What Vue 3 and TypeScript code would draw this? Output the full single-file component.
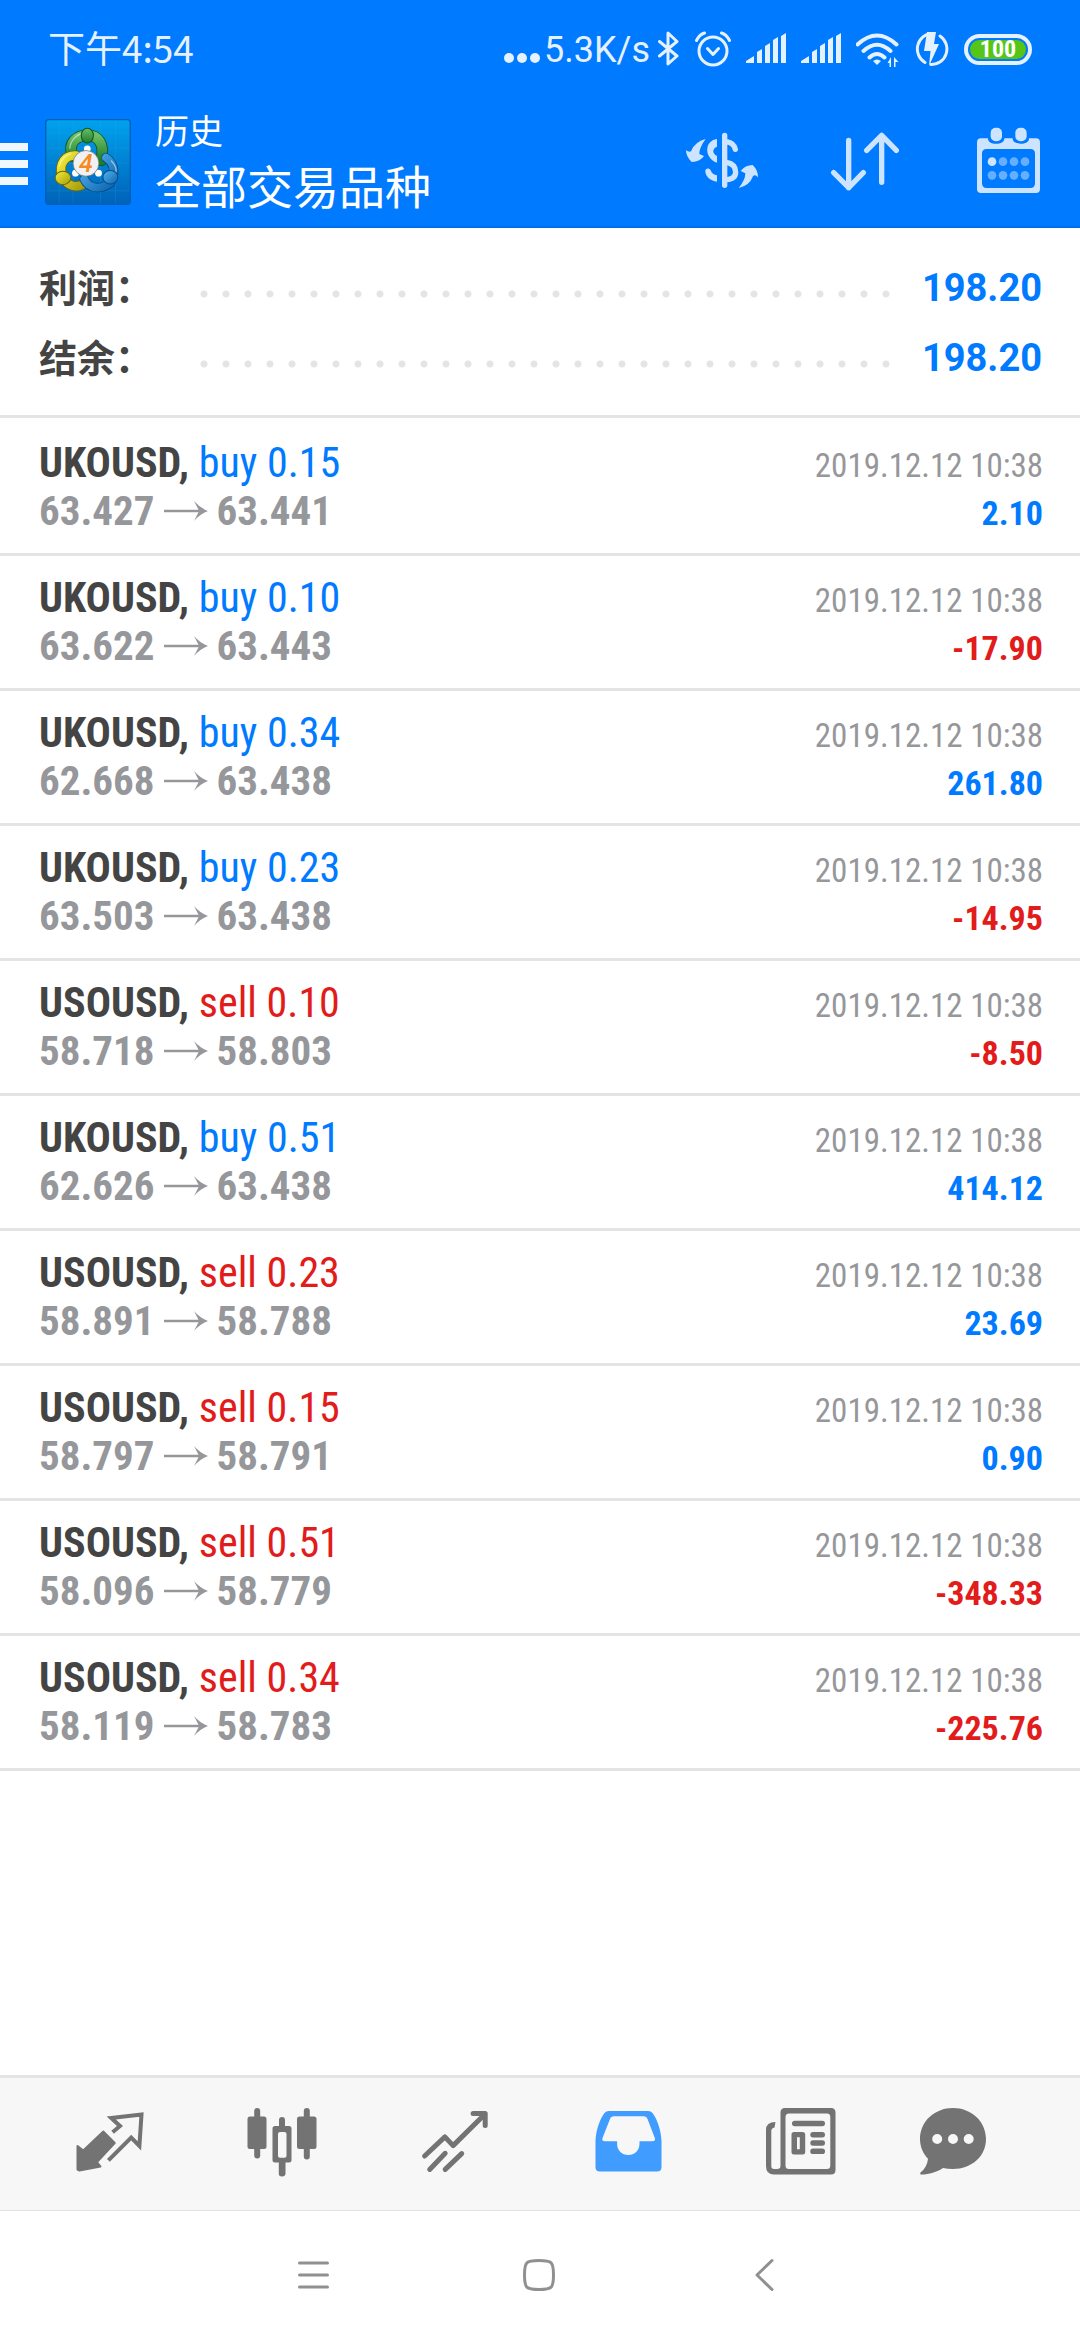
<script setup lang="ts">
interface Deal {
  symbol: string
  side: 'buy' | 'sell'
  volume: string
  open: string
  close: string
  time: string
  profit: string
}

const summary = [
  { label: '利润', value: '198.20' },
  { label: '结余', value: '198.20' },
]

const time = '2019.12.12 10:38'

const deals: Deal[] = [
  { symbol: 'UKOUSD', side: 'buy', volume: '0.15', open: '63.427', close: '63.441', time, profit: '2.10' },
  { symbol: 'UKOUSD', side: 'buy', volume: '0.10', open: '63.622', close: '63.443', time, profit: '-17.90' },
  { symbol: 'UKOUSD', side: 'buy', volume: '0.34', open: '62.668', close: '63.438', time, profit: '261.80' },
  { symbol: 'UKOUSD', side: 'buy', volume: '0.23', open: '63.503', close: '63.438', time, profit: '-14.95' },
  { symbol: 'USOUSD', side: 'sell', volume: '0.10', open: '58.718', close: '58.803', time, profit: '-8.50' },
  { symbol: 'UKOUSD', side: 'buy', volume: '0.51', open: '62.626', close: '63.438', time, profit: '414.12' },
  { symbol: 'USOUSD', side: 'sell', volume: '0.23', open: '58.891', close: '58.788', time, profit: '23.69' },
  { symbol: 'USOUSD', side: 'sell', volume: '0.15', open: '58.797', close: '58.791', time, profit: '0.90' },
  { symbol: 'USOUSD', side: 'sell', volume: '0.51', open: '58.096', close: '58.779', time, profit: '-348.33' },
  { symbol: 'USOUSD', side: 'sell', volume: '0.34', open: '58.119', close: '58.783', time, profit: '-225.76' },
]

const isLoss = (profit: string): boolean => profit.startsWith('-')
</script>

<template>
  <div class="screen">
    <header class="top">
      <div class="status">
        <span class="clock">下午4:54</span>
        <div class="indicators">
          <svg class="more" viewBox="0 0 36 36" width="36" height="36" aria-hidden="true">
            <circle cx="5" cy="27" r="5" /><circle cx="18" cy="27" r="5" /><circle cx="31" cy="27" r="5" />
          </svg>
          <span class="speed">5.3K/s</span>
          <div class="symbols">
            <svg viewBox="0 0 22 36" width="22" height="36" aria-hidden="true">
              <path d="M1.500 10.500 19 25 10 33V2L19 10.500 1.500 25" class="line" />
            </svg>
            <svg viewBox="0 0 36 36" width="36" height="36" aria-hidden="true">
              <circle cx="18" cy="20" r="14" class="line" />
              <path d="M12.500 17.500 18 23.500 23.500 17.500M1.500 9.500C3 6.500 6 3 9.500 2M34.500 9.500C33 6.500 30 3 26.500 2" class="line" />
            </svg>
            <svg v-for="n in 2" :key="n" viewBox="0 0 40 36" width="40" height="36" aria-hidden="true">
              <path d="M0 32V30L8 25V32ZM11 32V21L16 18V32ZM19 32V15L24 12V32ZM27 32V9L32 6V32ZM35 32V5L40 2V32Z" />
            </svg>
            <svg viewBox="0 0 44 36" width="44" height="36" aria-hidden="true">
              <path d="M1.500 13.500Q21 -4.500 40.500 13.500M7.500 20Q21 7.500 34.500 20M13.500 26.500Q21 19.500 28.500 26.500" class="arc" />
              <path d="M17 30Q21 27 25 30L21 34ZM35 26V36H33.500V32H31.500ZM38 36V26L42.500 31H39.500V36Z" />
            </svg>
            <svg viewBox="0 0 34 36" width="34" height="36" aria-hidden="true">
              <path d="M17 2.500A15 15.500 0 0 0 10 31.500M25 5A15 15.500 0 0 1 16 33.500" class="line" />
              <path d="M12 1H21L19 13H24L14 35 15.500 20H9Z" />
            </svg>
            <span class="battery"><span class="charge">100</span></span>
          </div>
        </div>
      </div>

      <div class="bar">
        <button class="menu" type="button" aria-label="菜单"><i></i><i></i><i></i></button>
        <svg class="logo" viewBox="48 58 254 254" width="86" height="86" aria-hidden="true">
          <defs>
            <linearGradient id="tile" x1="0" y1="0" x2="0" y2="1">
              <stop offset="0" stop-color="#00a2ee" /><stop offset="1" stop-color="#0062b8" />
            </linearGradient>
            <linearGradient id="green" x1="0" y1="0" x2="0" y2="1">
              <stop offset="0" stop-color="#6cc067" /><stop offset="1" stop-color="#1c7d2b" />
            </linearGradient>
            <linearGradient id="yellow" x1="0" y1="0" x2="1" y2="1">
              <stop offset="0" stop-color="#f4ec3c" /><stop offset="1" stop-color="#a79b08" />
            </linearGradient>
            <linearGradient id="blue" x1="0" y1="0" x2="1" y2="1">
              <stop offset="0" stop-color="#55b4ee" /><stop offset="1" stop-color="#0c66b0" />
            </linearGradient>
          </defs>
          <rect x="50" y="60" width="250" height="250" rx="9" fill="url(#tile)" stroke="#0060b4" stroke-width="4" />
          <path d="M90 62V308M131 62V308M212 62V308M256 62V308M52 100H298M52 144H298M52 188H298M52 270H298" stroke="#3db4f0" stroke-opacity=".25" stroke-width="2" />
          <g fill="#fff"><circle cx="138" cy="218" r="10" /><circle cx="206" cy="218" r="10" /><circle cx="173" cy="146" r="10" /></g>
          <g fill="none" stroke-linecap="round">
            <path d="M130 168C112 126 146 106 173 106C204 106 226 130 214 180" stroke="#14561d" stroke-width="34" />
            <path d="M130 168C112 126 146 106 173 106C204 106 226 130 214 180" stroke="url(#green)" stroke-width="29" />
            <path d="M140 166C108 164 88 188 98 226M108 240C124 262 152 260 166 246" stroke="#6c6604" stroke-width="30" />
            <path d="M140 166C108 164 88 188 98 226M108 240C124 262 152 260 166 246" stroke="url(#yellow)" stroke-width="25" />
            <path d="M228 172C246 184 256 204 248 230M164 236C180 268 216 266 242 246" stroke="#064a86" stroke-width="28" />
            <path d="M228 172C246 184 256 204 248 230M164 236C180 268 216 266 242 246" stroke="url(#blue)" stroke-width="23" />
            <path d="M121 144C124 120 142 104 158 100M91 196C94 176 110 164 124 161M244 182C254 192 259 204 258 214" stroke="#fff" stroke-opacity=".5" stroke-width="4" />
          </g>
          <ellipse cx="173" cy="107" rx="18" ry="22" fill="url(#green)" stroke="#14561d" stroke-width="3" />
          <ellipse cx="101" cy="232" rx="23" ry="20" fill="url(#yellow)" stroke="#6c6604" stroke-width="3" />
          <ellipse cx="241" cy="230" rx="22" ry="20" fill="url(#blue)" stroke="#064a86" stroke-width="3" />
          <circle cx="169" cy="189" r="38" fill="#f1f1f3" stroke="#6d6d60" stroke-width="2" />
          <text x="169" y="214" text-anchor="middle" class="version">4</text>
        </svg>
        <div class="titles">
          <span class="section">历史</span>
          <h1>全部交易品种</h1>
        </div>
        <div class="actions">
          <button type="button" aria-label="货币">
            <svg viewBox="0 0 216 216" width="72" height="72">
              <path d="M0 79Q10 86 15 82 26 53 59 45 40 70 40 90L54 96Q44 113 17 114 0 98 0 79ZM164 141Q177 123 200 123 216 138 216 160 207 150 201 157 190 186 158 192 178 168 178 148ZM93 45C54 50 54 103 93 116V96C78 88 78 74 93 68ZM58 143C57 133 69 130 74 139 77 148 84 153 93 154V173C74 170 60 159 58 143Z" />
              <path d="M116 34V184M122 53Q144 57 148 76" class="stroke" />
              <path d="M122 115C142 119 149 131 149 144 149 160 136 166 122 167" class="stroke" />
            </svg>
          </button>
          <button type="button" aria-label="排序">
            <svg viewBox="0 0 216 216" width="72" height="72">
              <path d="M59 49V191M14 146 59 191 103 146M158 175V34M113 79 158 34 202 79" class="stroke" />
            </svg>
          </button>
          <button type="button" aria-label="日期">
            <svg viewBox="0 0 216 216" width="72" height="72">
              <path fill-rule="evenodd" d="M27 43H48V44C48 53 58 59 72 59S97 53 97 44V43H122V44C122 53 132 59 146 59S171 53 171 44V43H192Q204 43 204 55V195Q204 207 192 207H27Q15 207 15 195V55Q15 43 27 43ZM44 75Q30 75 30 89V178Q30 192 44 192H175Q189 192 189 178V89Q189 75 175 75Z" />
              <rect x="56" y="11" width="34" height="41" rx="15" /><rect x="130" y="11" width="34" height="41" rx="15" />
              <circle cx="60" cy="113" r="13" />
              <g class="dim">
                <circle v-for="x in [93, 126, 159]" :key="x" :cx="x" cy="113" r="13" />
                <circle v-for="x in [60, 93, 126, 159]" :key="x" :cx="x" cy="154" r="13" />
              </g>
            </svg>
          </button>
        </div>
      </div>
    </header>

    <main>
      <dl class="summary">
        <div v-for="item in summary" :key="item.label" class="total">
          <dt>{{ item.label }}：</dt>
          <dd>{{ item.value }}</dd>
        </div>
      </dl>
      <ul class="deals">
        <li v-for="(deal, i) in deals" :key="i" class="deal">
          <div class="row">
            <span class="name">{{ deal.symbol }}, <span class="order" :class="deal.side">{{ deal.side }} {{ deal.volume }}</span></span>
            <time>{{ deal.time }}</time>
          </div>
          <div class="row">
            <span class="prices">
              <span>{{ deal.open }}</span>
              <svg viewBox="0 0 44 22" width="44" height="22" aria-hidden="true">
                <path d="M0 9.800H34.500L30 1Q36 8 44 11 36 14 30 21L34.500 12.200H0Z" />
              </svg>
              <span>{{ deal.close }}</span>
            </span>
            <span class="profit" :class="{ loss: isLoss(deal.profit) }">{{ deal.profit }}</span>
          </div>
        </li>
      </ul>
    </main>

    <nav class="tabs">
      <button type="button" aria-label="行情">
        <svg viewBox="0 0 72 72" width="72" height="72">
          <path d="M4.500 38 10.300 42.500 30.300 23.500 41.700 35 24 54 27.500 58.500 6.500 62.500 4.500 61.500Z" class="solid" />
          <path d="M39.600 24.200 47 18 38.200 9.900 68.500 6.500 66.400 38 58.200 29.600 35.400 52.300" class="thin" />
        </svg>
      </button>
      <button type="button" aria-label="图表">
        <svg viewBox="0 0 72 72" width="72" height="72">
          <rect x="1.500" y="8.500" width="19" height="32.500" rx="2.500" /><rect x="8.200" y="0" width="6" height="50.500" rx="3" />
          <rect x="51" y="8.500" width="19.500" height="32.500" rx="2.500" /><rect x="57.800" y="0" width="6" height="51.500" rx="3" />
          <path fill-rule="evenodd" d="M33 18V12Q33 9 36 9T39 12V18H43Q45.500 18 45.500 20.500V52Q45.500 54.500 43 54.500H39.500V65.500Q39.500 68.500 36 68.500T32.800 65.500V54.500H29Q26.500 54.500 26.500 52V20.500Q26.500 18 29 18ZM34 24Q32 24 32 26V48Q32 49.700 34 49.700H38.500Q40.500 49.700 40.500 48V26Q40.500 24 38.500 24Z" />
        </svg>
      </button>
      <button type="button" aria-label="交易">
        <svg viewBox="0 0 72 72" width="72" height="72">
          <path d="M5.600 48 25.900 28.900 34.100 37.600 65.800 6.200M54.100 5.500H66.200V17.600M10.700 61.400 26.200 45.300M26.200 61.400 42.700 45.600" class="trend" />
        </svg>
      </button>
      <button type="button" class="active" aria-label="历史" aria-current="page">
        <svg viewBox="0 0 72 72" width="72" height="72">
          <path fill-rule="evenodd" d="M3.500 34C3.500 22 9 9 12.500 5Q14 3 17 3H56Q59 3 60.500 5C64 9 69.500 22 69.500 34V59Q69.500 63.500 65 63.500H8Q3.500 63.500 3.500 59ZM22 8.200Q19 8.200 18 11L10.500 30Q9.500 33.300 13 33.300H25.100V36C25.100 42.500 30 47 36.300 47S47.500 42.500 47.500 36V33.300H60Q64 33.300 62.800 30L55.500 11Q54.500 8.200 51.500 8.200Z" />
        </svg>
      </button>
      <button type="button" aria-label="新闻">
        <svg viewBox="0 0 72 72" width="72" height="72">
          <path fill-rule="evenodd" d="M20 0H66Q70.500 0 70.500 4.500V62Q70.500 66.500 66 66.500H9Q1 66.500 1 58V22Q1 14 10.500 14L9.500 19.500Q6.300 20 6.300 23V58Q6.300 61 9 61H12Q15.500 61 15.500 58V4.500Q15.500 0 20 0ZM24 5.500Q20.500 5.500 20.500 9V57.500Q20.500 61 24 61H62Q65.300 61 65.300 57.500V9Q65.300 5.500 62 5.500Z" />
          <rect x="27" y="12.800" width="33" height="5.500" rx="2.700" />
          <path fill-rule="evenodd" d="M29 24H37.500Q40.200 24 40.200 26.500V44Q40.200 46.500 37.500 46.500H29Q26.500 46.500 26.500 44V26.500Q26.500 24 29 24ZM32 29.300V41.300H34.800V29.300Z" />
          <rect x="45.300" y="24" width="14.700" height="5.500" rx="2.700" /><rect x="45.300" y="32.300" width="14.700" height="5.500" rx="2.700" /><rect x="45.300" y="40.600" width="14.700" height="5.500" rx="2.700" />
        </svg>
      </button>
      <button type="button" aria-label="聊天">
        <svg viewBox="0 0 72 72" width="72" height="72">
          <path fill-rule="evenodd" d="M36 0C54.500 0 69 13.500 69 31S54.500 61 36 61Q30.500 61 26 60C20 64 12 66.500 4.500 66.500Q2.500 66.500 3.500 64.500C8 61 10.500 56 11 50.700C6 45.500 3 38.500 3 31C3 13.500 17.500 0 36 0ZM20.200 26A5 5 0 1 0 20.200 36 5 5 0 1 0 20.200 26ZM36 26A5 5 0 1 0 36 36 5 5 0 1 0 36 26ZM51.700 26A5 5 0 1 0 51.700 36 5 5 0 1 0 51.700 26Z" />
        </svg>
      </button>
    </nav>

    <div class="system">
      <button type="button" aria-label="最近任务">
        <svg viewBox="0 0 36 36" width="36" height="36"><path d="M3.500 6H31.500M3.500 18H31.500M3.500 30H31.500" /></svg>
      </button>
      <button type="button" aria-label="主屏幕">
        <svg viewBox="0 0 36 36" width="36" height="36"><path d="M18 3.500C31 3.500 32.500 5 32.500 18S31 32.500 18 32.500 3.500 31 3.500 18 5 3.500 18 3.500Z" /></svg>
      </button>
      <button type="button" aria-label="返回">
        <svg viewBox="0 0 36 36" width="36" height="36"><path d="M26 3.500 11 18 26 32.500" /></svg>
      </button>
    </div>
  </div>
</template>

<style>
body {
  margin: 0;
  background: #fff;
}
</style>

<style scoped>
.screen {
  display: flex;
  flex-direction: column;
  min-height: 100vh;
  background: #fff;
  color: #444;
  font-family: Roboto, "Noto Sans CJK SC", sans-serif;
}

button {
  display: flex;
  align-items: center;
  justify-content: center;
  padding: 0;
  border: 0;
  background: none;
}

svg {
  display: block;
  flex: none;
}

.top {
  border-bottom: 2px solid #0070ea;
  background: #007aff;
  color: #fff;
}

.status {
  display: flex;
  align-items: center;
  justify-content: space-between;
  height: 98px;
  padding: 0 48px;
  color: #e5f1ff;
  font-size: 36px;
}

.status svg {
  fill: #e5f1ff;
}

.status .line,
.status .arc {
  fill: none;
  stroke: #e5f1ff;
  stroke-width: 3;
  stroke-linecap: round;
  stroke-linejoin: round;
}

.status .arc {
  stroke-width: 4;
}

.clock {
  padding-bottom: 4px;
  font-family: "Noto Sans CJK SC", sans-serif;
  font-size: 37px;
}

.indicators {
  display: flex;
  align-items: center;
}

.speed {
  margin: 2px 8px 0 4px;
}

.symbols {
  display: flex;
  align-items: center;
  gap: 15px;
}

.battery {
  box-sizing: border-box;
  width: 68px;
  height: 31px;
  padding: 2px;
  border: 4px solid #e5f1ff;
  border-radius: 16px;
}

.charge {
  display: block;
  height: 19px;
  border-radius: 10px;
  background: #56c517;
  color: #fff;
  font: 700 24px/19px "Roboto Condensed", "Liberation Sans Narrow", Roboto, sans-serif;
  text-align: center;
}

.bar {
  display: flex;
  align-items: center;
  height: 128px;
  padding-right: 36px;
}

.menu {
  flex-direction: column;
  align-items: stretch;
  gap: 9px;
  width: 28px;
  margin: 4px 17px 0 0;
}

.menu i {
  height: 8px;
  background: #f0f7ff;
}

.version {
  fill: #f58a1f;
  font: italic 500 74px Roboto, sans-serif;
}

.titles {
  flex: 1;
  margin: 0 0 6px 24px;
  font-family: "Noto Sans CJK SC", sans-serif;
}

.section {
  display: block;
  font-size: 34px;
  line-height: 50px;
}

h1 {
  margin: 0;
  font-size: 46px;
  font-weight: 400;
  line-height: 58px;
}

.actions {
  display: flex;
  gap: 71px;
  margin-bottom: 4px;
}

.actions svg {
  fill: #cce4ff;
}

.actions .stroke {
  fill: none;
  stroke: #cce4ff;
  stroke-width: 16;
  stroke-linecap: round;
  stroke-linejoin: round;
}

.actions .dim {
  fill: #66afff;
}

main {
  flex: 1;
}

.summary {
  margin: 0;
  padding: 24px 38px 23px 39px;
  border-bottom: 3px solid #e4e4e4;
}

.total {
  display: flex;
  align-items: center;
  height: 70px;
  font-size: 38px;
  font-weight: 700;
}

/* dotted leader between the label and the amount */
.total::before {
  content: "";
  order: 1;
  flex: 1;
  height: 8px;
  margin-top: 14px;
  background: radial-gradient(circle at 4px 4px, #e4e4e4 3px, transparent 4px) 0 0 / 22px 8px;
}

dt {
  flex: none;
  width: 161px;
  padding-bottom: 4px;
  font-family: "Noto Sans CJK SC", sans-serif;
  font-weight: 700;
}

dd {
  order: 2;
  width: 150px;
  margin: 2px 0 0;
  color: #007aff;
  text-align: right;
}

.deals {
  margin: 0;
  padding: 3px 0 0;
  list-style: none;
  font-family: "Roboto Condensed", "Liberation Sans Narrow", Roboto, sans-serif;
}

.deal {
  padding: 18px 37px 18px 39px;
  border-bottom: 3px solid #e4e4e4;
}

.row {
  display: flex;
  align-items: baseline;
  justify-content: space-between;
  height: 48px;
  line-height: 48px;
}

.name {
  font-size: 42px;
  font-weight: 700;
}

.order {
  font-weight: 400;
}

.buy,
.profit {
  color: #007aff;
}

.sell,
.profit.loss {
  color: #e21b1b;
}

time,
.prices {
  color: #96979b;
}

time {
  font-size: 33px;
}

.prices {
  display: flex;
  align-items: center;
  gap: 9px;
  font-size: 41px;
  font-weight: 700;
}

.prices svg {
  fill: #96979b;
}

.profit {
  font-size: 34px;
  font-weight: 700;
}

.tabs {
  display: grid;
  grid-template-columns: repeat(5, 173fr) 132fr;
  height: 132px;
  padding: 0 61px 0 22px;
  border-top: 3px solid #e4e4e4;
  border-bottom: 1px solid #e0e0e0;
  background: #f7f7f7;
}

.tabs svg {
  fill: #737373;
}

.tabs .active svg {
  fill: #409cff;
}

.tabs .solid {
  stroke: #737373;
  stroke-width: 2;
  stroke-linejoin: round;
}

.tabs .thin,
.tabs .trend {
  fill: none;
  stroke: #737373;
  stroke-width: 4;
}

.tabs .trend {
  stroke-width: 5;
  stroke-linecap: round;
  stroke-linejoin: round;
}

.system {
  display: grid;
  grid-template-columns: repeat(3, 1fr);
  height: 127px;
  padding: 0 203px 2px 201px;
}

.system svg {
  fill: none;
  stroke: #909090;
  stroke-width: 3;
  stroke-linecap: round;
  stroke-linejoin: round;
}
</style>
